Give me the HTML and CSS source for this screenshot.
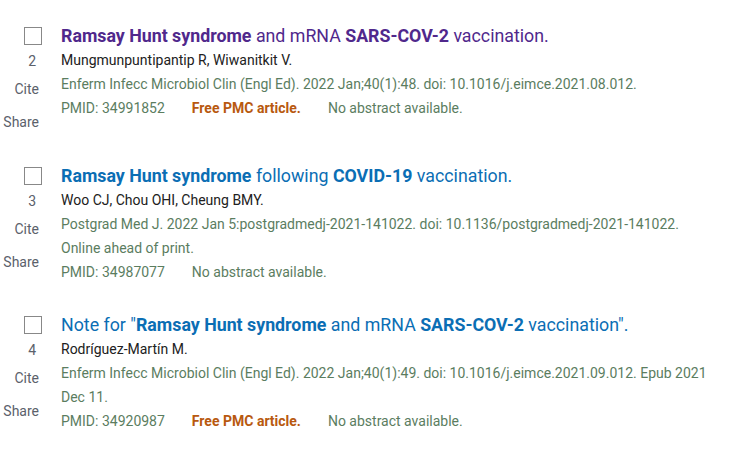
FILE: index.html
```html
<!DOCTYPE html>
<html lang="en">
<head>
<meta charset="utf-8">
<title>Search results</title>
<link rel="stylesheet" href="styles.css">
</head>
<body>
<main class="results">
  <article class="docsum">
    <div class="side">
      <span class="check"></span>
      <span class="num">2</span>
      <span class="action cite">Cite</span>
      <span class="action share">Share</span>
    </div>
    <div class="content">
      <a class="title visited"><b>Ramsay Hunt syndrome</b> and mRNA <b>SARS-COV-2</b> vaccination.</a>
      <div class="authors">Mungmunpuntipantip R, Wiwanitkit V.</div>
      <div class="citation">Enferm Infecc Microbiol Clin (Engl Ed). 2022 Jan;40(1):48. doi: 10.1016/j.eimce.2021.08.012.</div>
      <div class="meta"><span class="pmid">PMID: 34991852</span><span class="free">Free PMC article.</span><span class="noabs">No abstract available.</span></div>
    </div>
  </article>
  <article class="docsum">
    <div class="side">
      <span class="check"></span>
      <span class="num">3</span>
      <span class="action cite">Cite</span>
      <span class="action share">Share</span>
    </div>
    <div class="content">
      <a class="title"><b>Ramsay Hunt syndrome</b> following <b>COVID-19</b> vaccination.</a>
      <div class="authors">Woo CJ, Chou OHI, Cheung BMY.</div>
      <div class="citation">Postgrad Med J. 2022 Jan 5:postgradmedj-2021-141022. doi: 10.1136/postgradmedj-2021-141022. Online ahead of print.</div>
      <div class="meta"><span class="pmid">PMID: 34987077</span><span class="noabs">No abstract available.</span></div>
    </div>
  </article>
  <article class="docsum">
    <div class="side">
      <span class="check"></span>
      <span class="num">4</span>
      <span class="action cite">Cite</span>
      <span class="action share">Share</span>
    </div>
    <div class="content">
      <a class="title">Note for "<b>Ramsay Hunt syndrome</b> and mRNA <b>SARS-COV-2</b> vaccination".</a>
      <div class="authors">Rodríguez-Martín M.</div>
      <div class="citation">Enferm Infecc Microbiol Clin (Engl Ed). 2022 Jan;40(1):49. doi: 10.1016/j.eimce.2021.09.012. Epub 2021 Dec 11.</div>
      <div class="meta"><span class="pmid">PMID: 34920987</span><span class="free">Free PMC article.</span><span class="noabs">No abstract available.</span></div>
    </div>
  </article>
</main>
</body>
</html>
```

FILE: styles.css
```css
html, body {
  margin: 0;
  padding: 0;
  background: #ffffff;
}
body {
  font-family: Roboto, "Liberation Sans", sans-serif;
  color: #212121;
}
.results {
  padding: 24px 12px 0 0;
}
.docsum {
  display: flex;
  align-items: flex-start;
  padding-bottom: 29px;
}
.side {
  width: 42px;
  flex: none;
  display: flex;
  flex-direction: column;
  align-items: flex-end;
  font-size: 14px;
  color: #5b616b;
}
.check {
  display: block;
  width: 16px;
  height: 16px;
  margin-top: 3px;
  border: 1px solid #888888;
  background: #ffffff;
}
.num {
  margin-top: 6px;
  line-height: 20px;
  padding-right: 6px;
}
.action {
  line-height: 26px;
  padding-right: 3px;
}
.cite {
  margin-top: 5px;
}
.share {
  margin-top: 7px;
}
.content {
  margin-left: 19px;
  flex: 1;
  min-width: 0;
}
.title {
  display: block;
  font-size: 17.8px;
  line-height: 24px;
  color: #0b6eb4;
  text-decoration: none;
}
.title b {
  font-weight: 700;
}
.title.visited {
  color: #50288c;
}
.authors {
  font-size: 14px;
  line-height: 24px;
  color: #212121;
}
.citation {
  font-size: 14px;
  line-height: 24px;
  color: #5b7d5f;
}
.meta {
  display: flex;
  font-size: 14px;
  line-height: 24px;
  color: #5b7d5f;
}
.meta span + span {
  margin-left: 27px;
}
.free {
  color: #b8590f;
  font-weight: 700;
}
```
